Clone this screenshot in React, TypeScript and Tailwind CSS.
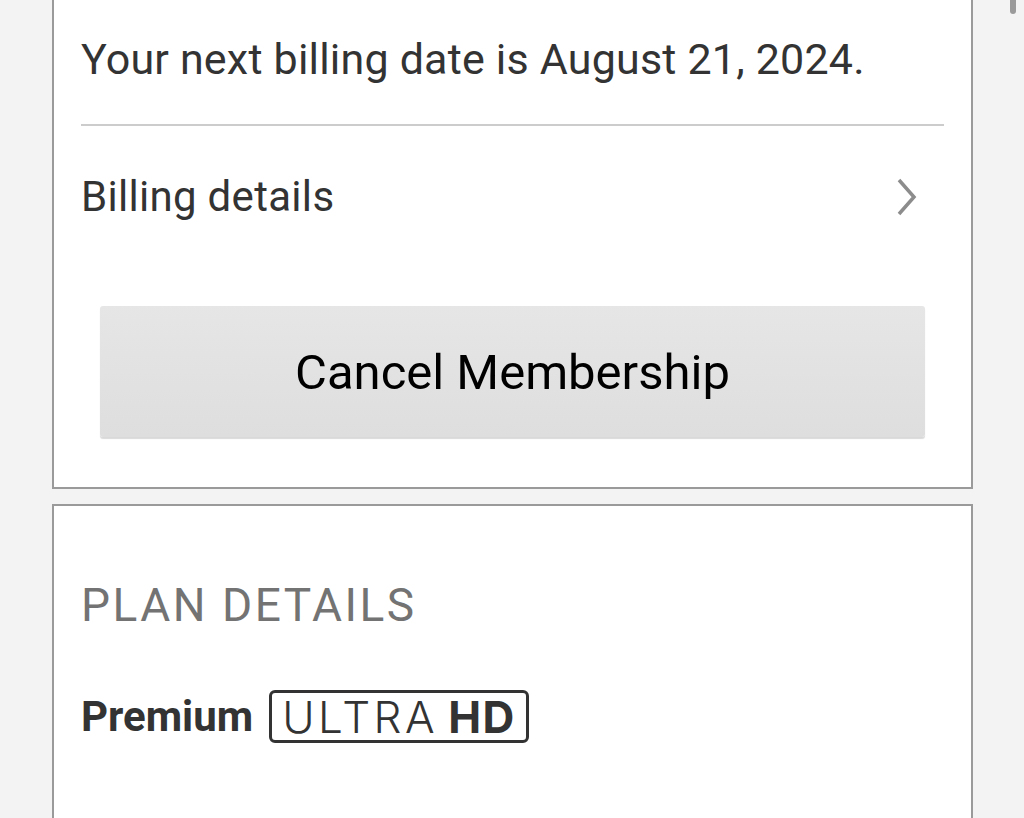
import React from "react";

export default function App() {
  return (
    <div
      className="relative h-[818px] w-[1024px] overflow-hidden bg-[#f3f3f3]"
      style={{ fontFamily: "Roboto, 'Liberation Sans', sans-serif" }}
    >
      <div className="ml-[52px] w-[921px]">
        {/* Card 1 */}
        <div className="border-x-2 border-b-2 border-[#9a9a9a] bg-white px-[27px]">
          <div className="flex h-[124px] items-center pb-[6px]">
            <p className="text-[43px] leading-none tracking-[0.2px] text-[#333333]">
              Your next billing date is August 21, 2024.
            </p>
          </div>
          <div className="h-[2px] bg-[#cccccc]" />
          <div className="flex h-[142px] items-center justify-between">
            <span className="text-[42px] leading-none tracking-[0.3px] text-[#333333]">
              Billing details
            </span>
            <svg width="22" height="40" viewBox="0 0 22 40" className="mr-[26px]">
              <path d="M3 3 L18 20 L3 37" fill="none" stroke="#8c8c8c" strokeWidth="3.5" />
            </svg>
          </div>
          <div className="mt-[38px] px-[19px] pb-[50px]">
            <button className="flex h-[131px] w-full items-center justify-center rounded-[3px] bg-gradient-to-b from-[#e6e6e6] to-[#dedede] pt-[2px] text-[49px] leading-none text-black shadow-[0_2px_1px_rgba(0,0,0,0.15)]">
              Cancel Membership
            </button>
          </div>
        </div>

        {/* Card 2 */}
        <div className="mt-[15px] h-[400px] border-2 border-[#9a9a9a] bg-white px-[27px]">
          <div className="pt-[76px]">
            <h2 className="text-[46px] leading-none tracking-[2.5px] text-[#737373]">PLAN DETAILS</h2>
          </div>
          <div className="mt-[62px] flex items-center gap-[16px]">
            <span className="text-[42px] font-bold leading-none text-[#333333]">Premium</span>
            <span
              className="flex h-[53px] items-center rounded-[6px] border-[3px] border-[#333333] pl-[10px] pr-[10px] text-[44px] leading-none text-[#333333]"
              style={{ fontFamily: "Inter, 'Liberation Sans', sans-serif" }}
            >
              <span className="font-light tracking-[3.5px]">ULTRA</span>
              <span className="ml-[10px] font-bold tracking-[1.5px]">HD</span>
            </span>
          </div>
        </div>
      </div>

      {/* scrollbar */}
      <div className="absolute right-[8px] top-0 h-[14px] w-[6px] rounded-b-full bg-[#9a9a9a]" />
    </div>
  );
}
